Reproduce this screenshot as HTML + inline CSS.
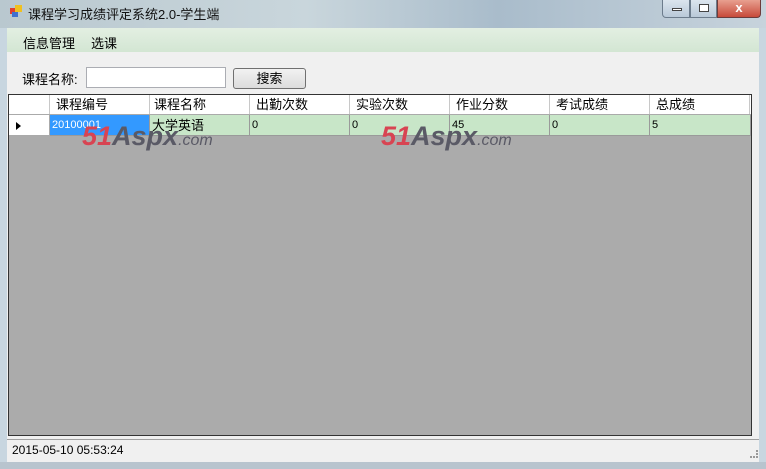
<!DOCTYPE html>
<html><head><meta charset="utf-8"><style>
*{margin:0;padding:0;box-sizing:border-box}
body{width:766px;height:469px;overflow:hidden;font-family:"Liberation Sans","Noto Sans CJK SC",sans-serif;font-size:12px;color:#000;background:#c4d2dc;position:relative}
.abs{position:absolute}
#title{left:0;top:0;width:766px;height:28px;background:linear-gradient(90deg,#b9c8cf 0%,#c9d6dc 40%,#a9bccb 65%,#c7d3dc 100%)}
#frameL{left:0;top:28px;width:7px;height:441px;background:#c8d6e0}
#frameR{left:759px;top:28px;width:7px;height:441px;background:#c8d6e0}
#frameB{left:0;top:462px;width:766px;height:7px;background:#b8c4ce}
#client{left:7px;top:28px;width:752px;height:434px;background:#f0f0f0}
#menu{left:7px;top:28px;width:752px;height:24px;background:linear-gradient(#e3efe2,#d3e6d3)}
.th{position:absolute;top:0;height:19px;border-right:1px solid #c8c8c8;padding-left:6px;line-height:19px;font-size:13px;background:#fff}
.td{position:absolute;top:0;height:21px;border-right:1px solid #9a9a9a;border-bottom:1px solid #9a9a9a;padding-left:2px;line-height:21px;background:#c8e6c8;font-size:11px}
.wm{position:absolute;font:italic bold 27px "Liberation Sans",sans-serif;color:#d84452;letter-spacing:0px}
.wm span{color:#5a5a66;font-size:27px}
.wm small{color:#5a5a66;font-size:16px;font-weight:normal}
</style></head><body>
<div id="title" class="abs"></div>
<div class="abs" style="left:10px;top:8px;width:6px;height:6px;background:#e04030"></div>
<div class="abs" style="left:15px;top:5px;width:7px;height:7px;background:#f0c020"></div>
<div class="abs" style="left:12px;top:12px;width:6px;height:5px;background:#4070d0"></div>
<div class="abs" style="left:28px;top:4px;font-size:13px;color:#111">课程学习成绩评定系统2.0-学生端</div>
<div class="abs" style="left:662px;top:0;width:28px;height:18px;border:1px solid #6c7c8c;border-top:none;border-radius:0 0 0 4px;background:linear-gradient(#dbe5ee,#b9c9d8)"><div class="abs" style="left:9px;top:8px;width:10px;height:3px;border:1px solid #444;background:#fff"></div></div>
<div class="abs" style="left:690px;top:0;width:27px;height:18px;border:1px solid #6c7c8c;border-top:none;background:linear-gradient(#dbe5ee,#b9c9d8)"><div class="abs" style="left:8px;top:4px;width:10px;height:8px;border:1px solid #444;background:#fff"></div></div>
<div class="abs" style="left:717px;top:0;width:44px;height:18px;border:1px solid #6c3c3c;border-top:none;border-radius:0 0 4px 0;background:linear-gradient(#e8a090,#c74a3a);color:#fff;font-weight:bold;font-size:13px;text-align:center;line-height:16px">x</div>
<div id="frameL" class="abs"></div><div id="frameR" class="abs"></div><div id="frameB" class="abs"></div>
<div id="client" class="abs"></div>
<div id="menu" class="abs"></div>
<div class="abs" style="left:23px;top:33px;font-size:13px">信息管理</div>
<div class="abs" style="left:91px;top:33px;font-size:13px">选课</div>
<div class="abs" style="left:22px;top:69px;font-size:13px">课程名称:</div>
<div class="abs" style="left:86px;top:67px;width:140px;height:21px;border:1px solid #abadb3;background:#fff"></div>
<div class="abs" style="left:233px;top:68px;width:73px;height:21px;border:1px solid #707070;border-radius:3px;background:linear-gradient(#f2f2f2,#dcdcdc);text-align:center;line-height:19px;font-size:13px">搜索</div>
<div class="abs" style="left:8px;top:94px;width:744px;height:342px;border:1px solid #333;background:#ababab">
 <div class="abs" style="left:0;top:0;width:742px;height:20px;background:#fff;border-bottom:1px solid #aaa">
  <div class="th" style="left:0;width:41px"></div>
  <div class="th" style="left:41px;width:100px">课程编号</div>
  <div class="th" style="left:141px;width:100px;padding-left:4px">课程名称</div>
  <div class="th" style="left:241px;width:100px">出勤次数</div>
  <div class="th" style="left:341px;width:100px">实验次数</div>
  <div class="th" style="left:441px;width:100px">作业分数</div>
  <div class="th" style="left:541px;width:100px">考试成绩</div>
  <div class="th" style="left:641px;width:100px">总成绩</div>
 </div>
 <div class="abs" style="left:0;top:20px;width:742px;height:22px">
  <div class="td" style="left:0;width:41px;background:#fff;border-color:#aaa"><span style="position:absolute;left:7px;top:7px;border-left:5px solid #000;border-top:4px solid transparent;border-bottom:4px solid transparent"></span></div>
  <div class="td" style="left:41px;width:100px;background:#3399ff;color:#fff">20100001</div>
  <div class="td" style="left:141px;width:100px;font-size:13px">大学英语</div>
  <div class="td" style="left:241px;width:100px">0</div>
  <div class="td" style="left:341px;width:100px">0</div>
  <div class="td" style="left:441px;width:100px">45</div>
  <div class="td" style="left:541px;width:100px">0</div>
  <div class="td" style="left:641px;width:101px">5</div>
 </div>
</div>
<div class="wm abs" style="left:82px;top:121px">51<span>Aspx</span><small>.com</small></div>
<div class="wm abs" style="left:381px;top:121px">51<span>Aspx</span><small>.com</small></div>
<div class="abs" style="left:7px;top:439px;width:752px;height:1px;background:#a0a0a0"></div>
<div class="abs" style="left:12px;top:443px;font-size:12px">2015-05-10 05:53:24</div>
<div class="abs" style="left:750px;top:450px;width:8px;height:8px;border-right:2px dotted #999;border-bottom:2px dotted #999"></div>
</body></html>
